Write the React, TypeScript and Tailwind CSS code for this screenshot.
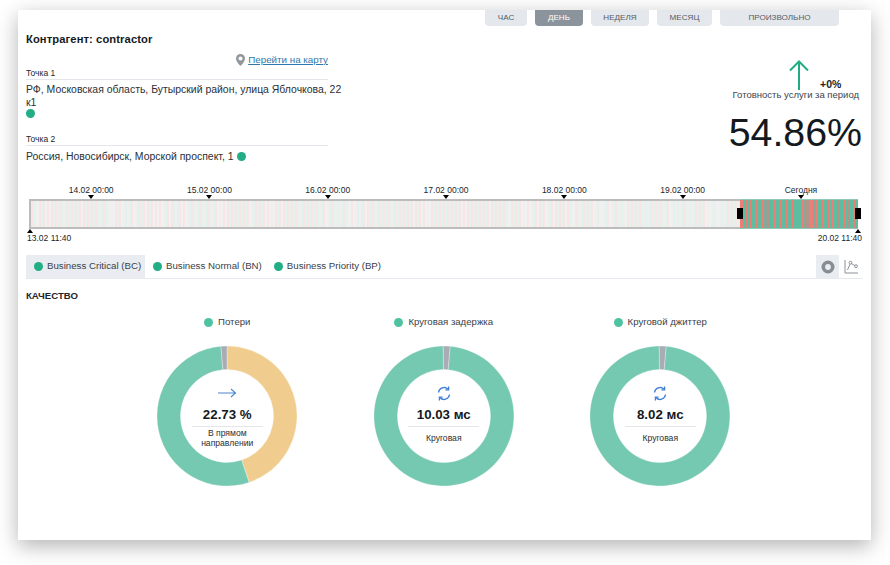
import React from "react";

function rnd(i: number) {
  const x = Math.sin(i * 12.9898 + 4.1) * 43758.5453;
  return x - Math.floor(x);
}

function arc(a0: number, a1: number, cx = 70, cy = 70, R = 70, r = 46.5) {
  const p = (rad: number, a: number) => {
    const t = ((a - 90) * Math.PI) / 180;
    return `${(cx + rad * Math.cos(t)).toFixed(2)} ${(cy + rad * Math.sin(t)).toFixed(2)}`;
  };
  const large = a1 - a0 > 180 ? 1 : 0;
  return `M${p(R, a0)}A${R} ${R} 0 ${large} 1 ${p(R, a1)}L${p(r, a1)}A${r} ${r} 0 ${large} 0 ${p(r, a0)}Z`;
}

function Donut({ segs }: { segs: [number, number, string][] }) {
  return (
    <svg width="140" height="140" viewBox="0 0 140 140" className="block">
      {segs.map(([a, b, c], i) => (
        <path key={i} d={arc(a, b)} fill={c} stroke="#fff" strokeWidth="0.3" />
      ))}
    </svg>
  );
}

function Dot({ className }: { className: string }) {
  return <span className={`inline-block rounded-full ${className}`} />;
}

function ArrowRight() {
  return (
    <svg width="20" height="10" viewBox="0 0 20 10" fill="none" stroke="#4a86d0" strokeWidth="1.1">
      <path d="M1 5H18.5M14 1l4.5 4-4.5 4" />
    </svg>
  );
}

function Sync() {
  return (
    <svg width="14" height="15" viewBox="0 0 14 15" fill="none" stroke="#3f7fd6" strokeWidth="1.3">
      <path d="M1.5 6.5A5.6 5.6 0 0 1 11 3.2" />
      <path d="M12.5 8.5A5.6 5.6 0 0 1 3 11.8" />
      <path d="M11.6 0.6v3.2H8.4" />
      <path d="M2.4 14.4v-3.2h3.2" />
    </svg>
  );
}

const tabs = [
  { t: "ЧАС", w: "w-[42px]" },
  { t: "ДЕНЬ", w: "w-[48px]", active: true },
  { t: "НЕДЕЛЯ", w: "w-[58px]" },
  { t: "МЕСЯЦ", w: "w-[55px]" },
  { t: "ПРОИЗВОЛЬНО", w: "w-[119px]" },
];

const ticks = ["14.02 00:00", "15.02 00:00", "16.02 00:00", "17.02 00:00", "18.02 00:00", "19.02 00:00", "Сегодня"];

const paleStripes = Array.from({ length: 355 }, (_, i) => {
  const v = rnd(i);
  if (i % 2 === 0) return v < 0.7 ? "#f8e6e6" : "#efefef";
  return v < 0.7 ? "#e3f2ec" : "#f1f1f1";
});
const hotStripes = Array.from({ length: 44 }, (_, i) => {
  const v = rnd(i + 500);
  const grow = 1 + Math.round(rnd(i + 900) * 1.4);
  if (i % 2 === 0) return { grow, color: v < 0.85 ? "#ea7f78" : "#b2958a" };
  return { grow, color: v < 0.85 ? "#5dbd9f" : "#86a898" };
});

const GREEN = "#76c9b1";
const ORANGE = "#f0cd8f";
const GRAY = "#a9acb5";

const charts = [
  {
    legend: "Потери",
    icon: <ArrowRight />,
    value: "22.73 %",
    caption: ["В прямом", "направлении"],
    segs: [[0, 161.6, ORANGE], [161.6, 355, GREEN], [355, 360, GRAY]] as [number, number, string][],
  },
  {
    legend: "Круговая задержка",
    icon: <Sync />,
    value: "10.03 мс",
    caption: ["Круговая"],
    segs: [[5, 359.4, GREEN], [359.4, 365, GRAY]] as [number, number, string][],
  },
  {
    legend: "Круговой джиттер",
    icon: <Sync />,
    value: "8.02 мс",
    caption: ["Круговая"],
    segs: [[5, 359.4, GREEN], [359.4, 365, GRAY]] as [number, number, string][],
  },
];

export default function App() {
  return (
    <div className="w-[890px] h-[565px] overflow-hidden bg-white font-['Liberation_Sans',Arial,sans-serif] text-[#222b33]">
      <div className="ml-[18px] mt-[10px] w-[853px] h-[530px] bg-white shadow-[0_6px_20px_rgba(0,0,0,0.3)] px-2">
        {/* Period tabs */}
        <div className="flex justify-end gap-2 pr-6 h-[16px]">
          {tabs.map((t) => (
            <div
              key={t.t}
              className={`${t.w} h-[16px] rounded-b-[4px] flex items-center justify-center text-[8.1px] ${
                t.active ? "bg-[#8b949d] text-white" : "bg-[#e4e8ed] text-[#555c63]"
              }`}
            >
              {t.t}
            </div>
          ))}
        </div>

        {/* Header */}
        <div className="flex justify-between h-[158px]">
          <div className="w-[302px] pt-[7px]">
            <div className="text-[11.2px] leading-[13px] font-bold text-[#15191d] tracking-[0.1px] whitespace-nowrap">Контрагент: contractor</div>
            <div className="flex justify-end items-center gap-[3px] mt-[8px] h-[12px]">
              <svg width="9" height="12" viewBox="0 0 9 12">
                <path fillRule="evenodd" fill="#8f969c" d="M4.5 0A4.5 4.5 0 0 0 0 4.5C0 7.5 4.5 12 4.5 12S9 7.5 9 4.5A4.5 4.5 0 0 0 4.5 0Zm0 2.4a2.1 2.1 0 1 1 0 4.2 2.1 2.1 0 0 1 0-4.2Z" />
              </svg>
              <a className="text-[9.8px] text-[#2f78ad] underline">Перейти на карту</a>
            </div>
            <div className="text-[8.5px] leading-[10px] mt-[2px] pb-[1px] border-b border-[#e3e7ec] text-[#22282d]">Точка 1</div>
            <div className="w-[330px] text-[10.45px] leading-[12.5px] mt-[4px] text-[#2a2f35]">
              <div className="whitespace-nowrap">РФ, Московская область, Бутырский район, улица Яблочкова, 22</div>
              <div>к1</div>
              <Dot className="w-[9px] h-[9px] bg-[#21ad85] block" />
            </div>
            <div className="text-[8.5px] leading-[10px] mt-[12px] pb-[1px] border-b border-[#e3e7ec] text-[#22282d]">Точка 2</div>
            <div className="flex items-center gap-[3px] text-[10.45px] leading-[12.5px] mt-[5px] text-[#2a2f35]">
              <span className="whitespace-nowrap">Россия, Новосибирск, Морской проспект, 1</span>
              <Dot className="w-[9px] h-[9px] bg-[#21ad85] shrink-0" />
            </div>
          </div>
          <div className="flex flex-col items-end pt-[34px]">
            <div className="flex items-end w-[130px] h-[30px] pl-[58px] mr-[2px]">
              <svg width="20" height="30" viewBox="0 0 20 30" fill="none" stroke="#1fae84" strokeWidth="2">
                <path d="M10 30V1.5M1 10.5l9-9 9 9" />
              </svg>
              <span className="ml-[11px] text-[10.5px] leading-[13px] font-bold text-[#20262c] -mb-[1px]">+0%</span>
            </div>
            <div className="text-[9.5px] leading-[12px] mr-[4px] mt-[-1px] text-[#3d444b] whitespace-nowrap">Готовность услуги за период</div>
            <div className="text-[39.3px] leading-[46px] mt-[8px] mr-[1px] text-[#14191e]">54.86%</div>
          </div>
        </div>

        {/* Timeline */}
        <div className="flex pl-[6px] h-[13px] text-[8.5px] leading-[12px] text-[#20262c]">
          {ticks.map((t) => (
            <div key={t} className="w-[118.3px] flex flex-col items-center">
              <span>{t}</span>
              <span className="w-0 h-0 -mt-[1px] border-x-[3.5px] border-x-transparent border-t-[4px] border-t-black" />
            </div>
          ))}
        </div>
        <div className="relative flex ml-[3px] w-[829px] h-[30px] mt-[2px]">
          <div className="flex flex-1 border-2 border-r-0 border-[#bcbcbc] overflow-hidden">
            {paleStripes.map((c, i) => (
              <div key={i} className="flex-1" style={{ backgroundColor: c }} />
            ))}
          </div>
          <div className="flex w-[118px] border-y border-[#8fc9b6] overflow-hidden">
            {hotStripes.map((s, i) => (
              <div key={i} style={{ flexGrow: s.grow, flexBasis: 0, backgroundColor: s.color }} />
            ))}
          </div>
          <div className="absolute left-[708px] top-[9px] w-[6px] h-[11px] bg-black" />
          <div className="absolute right-[-3px] top-[9px] w-[6px] h-[11px] bg-black" />
        </div>
        <div className="flex justify-between h-[16px] ml-[1px] text-[8.5px] leading-[11px] text-[#20262c]">
          <div className="flex flex-col items-start">
            <span className="w-0 h-0 border-x-[3.5px] border-x-transparent border-b-[4px] border-b-black" />
            <span>13.02 11:40</span>
          </div>
          <div className="flex flex-col items-end mr-[1px]">
            <span className="w-0 h-0 mr-[1px] border-x-[3.5px] border-x-transparent border-b-[4px] border-b-black" />
            <span>20.02 11:40</span>
          </div>
        </div>

        {/* Tabs */}
        <div className="flex items-stretch h-[24px] mt-[10px] border-b border-[#e6e9ee] text-[9.7px] text-[#3a4148]">
          <div className="flex items-center gap-[4px] px-2 w-[119px] bg-[#e9edf1] whitespace-nowrap">
            <Dot className="w-[9px] h-[9px] bg-[#21ad85] shrink-0" />
            Business Critical (BC)
          </div>
          <div className="flex items-center gap-[4px] pl-2 whitespace-nowrap">
            <Dot className="w-[9px] h-[9px] bg-[#21ad85] shrink-0" />
            Business Normal (BN)
          </div>
          <div className="flex items-center gap-[4px] pl-[12px] whitespace-nowrap">
            <Dot className="w-[9px] h-[9px] bg-[#21ad85] shrink-0" />
            Business Priority (BP)
          </div>
          <div className="ml-auto flex w-[47px]">
            <div className="w-[23px] bg-[#e9edf1] flex items-center justify-center">
              <svg width="14" height="14" viewBox="0 0 14 14" fill="none">
                <circle cx="7" cy="7" r="4.7" stroke="#868d94" strokeWidth="3.6" />
              </svg>
            </div>
            <div className="flex-1 flex items-center justify-center">
              <svg width="15" height="15" viewBox="0 0 15 15" fill="none" stroke="#8a9198" strokeWidth="1">
                <path d="M1 1v13h13" />
                <path d="M3.5 11 6.5 4l5 3" />
                <circle cx="6.5" cy="3.6" r="1.4" fill="#fff" />
                <circle cx="12" cy="7.2" r="1.4" fill="#fff" />
              </svg>
            </div>
          </div>
        </div>

        <div className="text-[9.6px] leading-[12px] font-bold mt-[11px] text-[#1f252a]">КАЧЕСТВО</div>

        {/* Charts */}
        <div className="flex pl-[93px] mt-[14px]">
          {charts.map((c) => (
            <div key={c.legend} className="w-[216.5px] flex flex-col items-center">
              <div className="flex items-center gap-[5px] h-[12px] text-[9.6px] text-[#3a4148]">
                <Dot className="w-[9px] h-[9px] bg-[#4fc3a1]" />
                {c.legend}
              </div>
              <div className="relative w-[140px] h-[140px] mt-[18px]">
                <Donut segs={c.segs} />
                <div className="absolute inset-0 flex flex-col items-center pt-[39px]">
                  <div className="h-[16px] flex items-center justify-center">{c.icon}</div>
                  <div className="text-[13.3px] leading-[15px] font-bold mt-[6px] text-[#15191d]">{c.value}</div>
                  <div className="w-[71px] h-[23px] border-t border-[#e3e7ec] mt-[4px] flex flex-col justify-center text-center text-[8.6px] leading-[10px] text-[#2a2f35]">
                    {c.caption.map((l) => (
                      <div key={l}>{l}</div>
                    ))}
                  </div>
                </div>
              </div>
            </div>
          ))}
        </div>
      </div>
    </div>
  );
}
